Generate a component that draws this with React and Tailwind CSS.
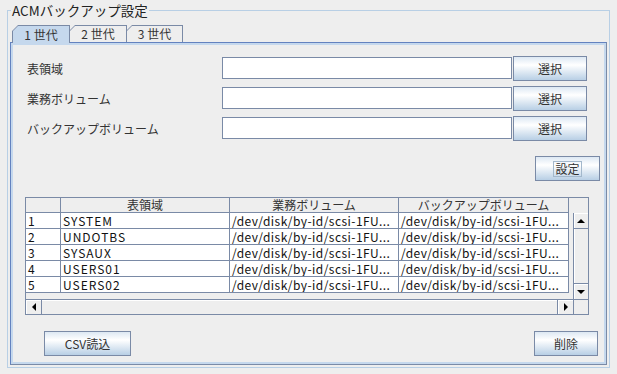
const JP = "font-['Noto_Sans_CJK_JP',sans-serif]";

const ROWS = [
  ['1', 'SYSTEM'],
  ['2', 'UNDOTBS'],
  ['3', 'SYSAUX'],
  ['4', 'USERS01'],
  ['5', 'USERS02'],
];
const PATH = '/dev/disk/by-id/scsi-1FU...';
const COLS = ['w-[35px]', 'w-[169px]', 'w-[169px]', 'w-[170px]'];

function Button({ children, className }) {
  return (
    <button
      className={`h-[25px] shrink-0 border border-[#7a8aa6] bg-[linear-gradient(180deg,#dde8f3_0%,#ffffff_35%,#b8cfe5_100%)] text-[12px] text-[#333333] flex items-center justify-center ${JP} ${className}`}
    >
      {children}
    </button>
  );
}

function Tab({ label, selected, className }) {
  return (
    <div
      className={`-mr-px bg-[#7a8aa6] px-px pt-px [clip-path:polygon(0_6px,6px_0,100%_0,100%_100%,0_100%)] ${selected ? 'h-[18px]' : 'h-[17px]'} ${className}`}
    >
      <div
        className={`h-full flex items-center justify-center text-[12px] text-[#333333] [clip-path:polygon(0_5px,5px_0,100%_0,100%_100%,0_100%)] ${selected ? 'bg-[#c5d8ed]' : 'bg-[#eeeeee]'}`}
      >
        {label}
      </div>
    </div>
  );
}

function FieldRow({ label }) {
  return (
    <div className="flex items-start h-[25px] ml-[16px]">
      <div className="w-[195px] h-[25px] flex items-center text-[12px] text-[#333333]">{label}</div>
      <div className="mt-px w-[290px] h-[22px] bg-white border border-[#7a8aa6]" />
      <Button className="ml-px w-[74px]">選択</Button>
    </div>
  );
}

function ArrowBtn({ dir, className }) {
  const tri = {
    up: 'border-x-[4px] border-x-transparent border-b-[4px] border-b-black',
    down: 'border-x-[4px] border-x-transparent border-t-[4px] border-t-black',
    left: 'border-y-[4px] border-y-transparent border-r-[4px] border-r-black',
    right: 'border-y-[4px] border-y-transparent border-l-[4px] border-l-black',
  }[dir];
  return (
    <div className={`bg-[#eeeeee] shadow-[inset_1px_1px_0_#ffffff] border-[#7a8aa6] flex items-center justify-center shrink-0 ${className}`}>
      <div className={`w-0 h-0 ${tri}`} />
    </div>
  );
}

export default function App() {
  return (
    <div className={`w-[617px] h-[374px] bg-[#eeeeee] overflow-hidden pt-[10px] ${JP}`}>
      <div className="relative ml-[7px] w-[603px] h-[358px] border border-[#b8cfe5] pt-[14px]">
        <span className="absolute left-[3px] top-[-9px] px-px bg-[#eeeeee] text-[13.5px] leading-[16px] text-[#222222]">
          ACMバックアップ設定
        </span>

        {/* tabs */}
        <div className="relative z-10 ml-[4px] -mb-px flex items-start h-[18px]">
          <Tab label="1 世代" selected className="w-[58px]" />
          <Tab label="2 世代" className="w-[58px]" />
          <Tab label="3 世代" className="w-[57px]" />
        </div>

        {/* tab content */}
        <div className="ml-[2px] w-[597px] h-[323px] border border-[#7a8aa6] border-t-[#6382bf] border-l-[#6382bf] shadow-[inset_0_0_0_2px_#c5d8ed] flex flex-col pt-[13px]">
          <div className="flex flex-col gap-[5px]">
            <FieldRow label="表領域" />
            <FieldRow label="業務ボリューム" />
            <FieldRow label="バックアップボリューム" />
          </div>

          <Button className="self-end mt-[15px] mr-[6px] w-[65px]">
            <span className="px-px leading-[14px] border border-[#a3b8cc]">設定</span>
          </Button>

          {/* table */}
          <div className="mt-[16px] ml-[14px] w-[564px] h-[118px] border border-[#7a8aa6] bg-[#eeeeee] flex flex-col">
            <div className="flex h-[15px]">
              <div className="w-[547px] flex">
                {['', '表領域', '業務ボリューム', 'バックアップボリューム'].map((h, i) => (
                  <div
                    key={i}
                    className={`${COLS[i]} h-[15px] border-r border-b border-[#7a8aa6] flex items-center justify-center text-[12px] leading-none text-[#333333]`}
                  >
                    {h}
                  </div>
                ))}
              </div>
            </div>
            <div className="flex h-[86px]">
              <div className="w-[547px] flex flex-col">
                {ROWS.map(([n, name]) => (
                  <div key={n} className="flex text-[12px] text-[#111111]">
                    {[n, name, PATH, PATH].map((c, i) => (
                      <div
                        key={i}
                        className={`${COLS[i]} h-[16px] border-r border-b border-[#7a8aa6] bg-white px-[2px] flex items-center whitespace-nowrap overflow-hidden ${i > 1 ? 'tracking-[0.45px]' : 'tracking-[1px]'}`}
                      >
                        {c}
                      </div>
                    ))}
                  </div>
                ))}
              </div>
              <div className="w-[15px] h-[86px] flex flex-col border-l border-[#7a8aa6]">
                <ArrowBtn dir="up" className="h-[16px] border-b" />
                <div className="flex-1 bg-[#eeeeee] shadow-[inset_1px_0_0_#ffffff]" />
                <ArrowBtn dir="down" className="h-[16px] border-t" />
              </div>
            </div>
            <div className="flex h-[15px]">
              <div className="w-[547px] flex border-t border-[#7a8aa6]">
                <ArrowBtn dir="left" className="w-[16px] border-r" />
                <div className="flex-1 bg-[#eeeeee] shadow-[inset_0_1px_0_#ffffff]" />
                <ArrowBtn dir="right" className="w-[16px] border-l" />
              </div>
              <div className="w-[15px] border-t border-l border-[#7a8aa6] bg-[#eeeeee]" />
            </div>
          </div>

          <div className="mt-[16px] flex justify-between">
            <Button className="ml-[33px] w-[87px]">CSV読込</Button>
            <Button className="mr-[8px] w-[64px]">削除</Button>
          </div>
        </div>
      </div>
    </div>
  );
}
